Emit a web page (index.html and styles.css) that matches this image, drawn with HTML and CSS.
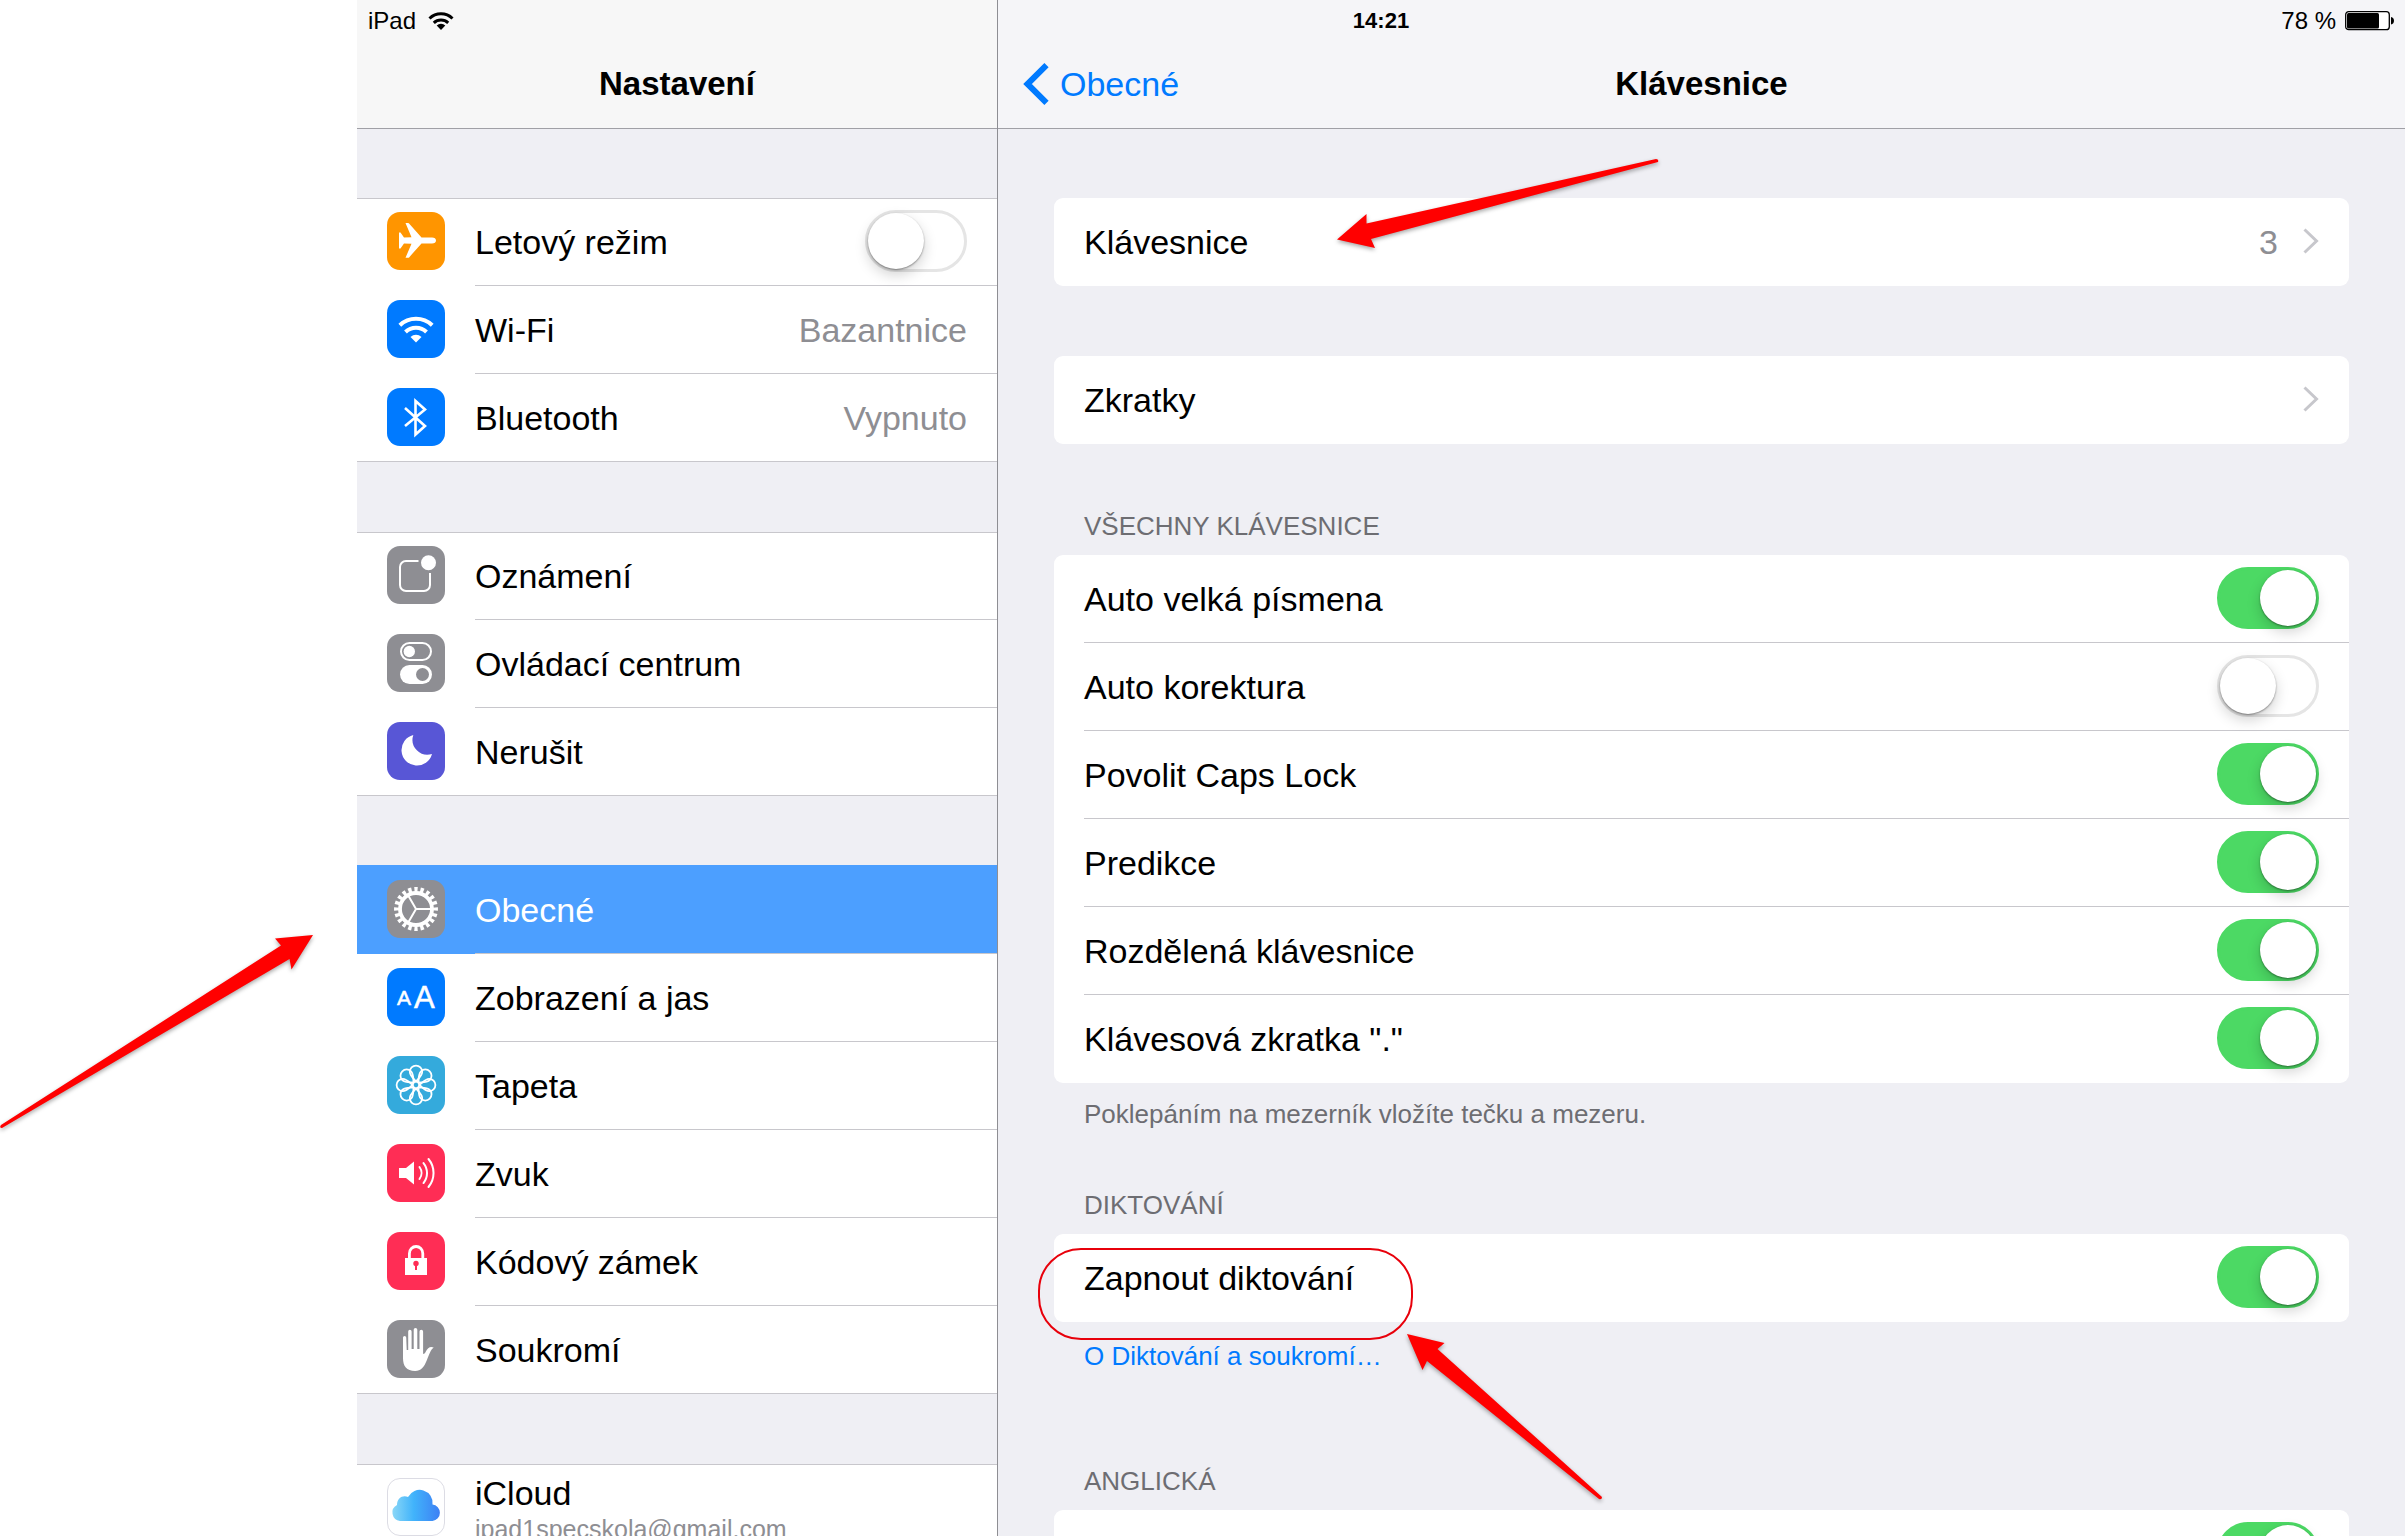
FILE: index.html
```html
<!DOCTYPE html>
<html lang="cs">
<head>
<meta charset="utf-8">
<meta name="viewport" content="width=device-width, initial-scale=1">
<title>Nastavení – Klávesnice</title>
<link rel="stylesheet" href="styles.css">
</head>
<body>
<div class="device">
  <div class="status">
    <span class="status-side">iPad
      <svg width="26" height="20" viewBox="0 0 26 20" aria-hidden="true"><g fill="none" stroke="#000" stroke-width="3"><path d="M1.500 7.500a16.500 16.500 0 0 1 23 0"/><path d="M5.800 11.800a10.500 10.500 0 0 1 14.400 0"/></g><path d="M13 19l-4.300-4.400a6 6 0 0 1 8.600 0z"/></svg>
    </span>
    <time class="status-time">14:21</time>
    <span class="status-side status-right">78 %
      <svg width="49" height="20" viewBox="0 0 49 20" aria-hidden="true"><rect x=".7" y=".7" width="43.600" height="18" rx="3" fill="#fff" stroke="#000" stroke-width="1.300"/><rect x="2" y="2" width="32" height="15.500" rx="1.500"/><path d="M46 6c4 .5 4 7 0 7.500z"/></svg>
    </span>
  </div>

  <aside class="sidebar">
    <header class="bar"><h1 class="title">Nastavení</h1></header>
    <nav class="scroll">
      <div class="group">
        <label class="row">
          <svg class="icon" viewBox="0 0 58 58" aria-hidden="true"><rect width="58" height="58" rx="13" fill="#ff9500"/><path fill="#fff" d="M49 28.500c0-2-1.500-3-4-3H34.500L22.500 12c-.5-.7-1-.9-2-.9h-2l6 14.200-7.500.3-3.500-5.100H12v16h1.500l3.500-5 7.500.3-6 14h2c1 0 1.500-.3 2-.9l12-13.400H45c2.500 0 4-1 4-3z"/></svg>
          <span class="cell"><span class="name">Letový režim</span><input class="switch" type="checkbox"></span>
        </label>
        <a class="row" href="#wifi">
          <svg class="icon" viewBox="0 0 58 58" aria-hidden="true"><rect width="58" height="58" rx="13" fill="#007aff"/><g fill="none" stroke="#fff" stroke-width="4"><path d="M12.800 25.300a23.500 23.500 0 0 1 32.400 0"/><path d="M18.500 32a15 15 0 0 1 21 0"/></g><path fill="#fff" d="M29 42.500l-5.500-5.600a8 8 0 0 1 11 0z"/></svg>
          <span class="cell"><span class="name">Wi-Fi</span><span class="value">Bazantnice</span></span>
        </a>
        <a class="row" href="#bluetooth">
          <svg class="icon" viewBox="0 0 58 58" aria-hidden="true"><rect width="58" height="58" rx="13" fill="#007aff"/><path fill="none" stroke="#fff" stroke-width="2.600" d="M18 20l20 18-9.500 8.500V13L38 21.500 18 38"/></svg>
          <span class="cell"><span class="name">Bluetooth</span><span class="value">Vypnuto</span></span>
        </a>
      </div>

      <div class="group">
        <a class="row" href="#oznameni">
          <svg class="icon" viewBox="0 0 58 58" aria-hidden="true"><rect width="58" height="58" rx="13" fill="#8e8e93"/><path fill="none" stroke="#fff" stroke-width="2" d="M31.500 15H19a6 6 0 0 0-6 6v18a6 6 0 0 0 6 6h18a6 6 0 0 0 6-6V27"/><circle cx="41.500" cy="16.700" r="7.500" fill="#fff"/></svg>
          <span class="cell"><span class="name">Oznámení</span></span>
        </a>
        <a class="row" href="#ovladaci-centrum">
          <svg class="icon" viewBox="0 0 58 58" aria-hidden="true"><rect width="58" height="58" rx="13" fill="#8e8e93"/><rect x="14" y="9" width="30" height="17" rx="8.500" fill="none" stroke="#fff" stroke-width="2"/><circle cx="22.300" cy="17.500" r="5.700" fill="#fff"/><rect x="13" y="31" width="32" height="19" rx="9.500" fill="#fff"/><circle cx="35.500" cy="40.500" r="6.500" fill="#8e8e93"/></svg>
          <span class="cell"><span class="name">Ovládací centrum</span></span>
        </a>
        <a class="row" href="#nerusit">
          <svg class="icon" viewBox="0 0 58 58" aria-hidden="true"><rect width="58" height="58" rx="13" fill="#5856d6"/><path fill="#fff" d="M26.300 13A15.500 15.500 0 1 0 45 32 15 15 0 0 1 26.300 13z"/></svg>
          <span class="cell"><span class="name">Nerušit</span></span>
        </a>
      </div>

      <div class="group">
        <a class="row row-selected" href="#obecne" aria-current="page">
          <svg class="icon" viewBox="0 0 58 58" aria-hidden="true"><rect width="58" height="58" rx="13" fill="#8e8e93"/><g fill="none" stroke="#fff"><circle cx="29" cy="29" r="16" stroke-width="3.800"/><circle cx="29" cy="29" r="19.200" stroke-width="5.500" pathLength="100" stroke-dasharray="2.700 2.300" stroke-dashoffset="1.350"/><path stroke-width="2" d="M29 29h15M29 29l-7.500-13M29 29l-7.500 13"/></g></svg>
          <span class="cell"><span class="name">Obecné</span></span>
        </a>
        <a class="row" href="#zobrazeni">
          <svg class="icon" viewBox="0 0 58 58" aria-hidden="true"><rect width="58" height="58" rx="13" fill="#007aff"/><g class="glyphs" fill="#fff" stroke="#fff" stroke-width=".5"><text x="10" y="37" font-size="21">A</text><text x="27" y="40" font-size="31">A</text></g></svg>
          <span class="cell"><span class="name">Zobrazení a jas</span></span>
        </a>
        <a class="row" href="#tapeta">
          <svg class="icon" viewBox="0 0 58 58" aria-hidden="true"><rect width="58" height="58" rx="13" fill="#34aadc"/><g fill="none" stroke="#fff" stroke-width="1.800"><circle cx="29" cy="29" r="3.300"/><path id="petal" d="M29 25.500C26 22 22.800 19.500 22.800 15.800a6.200 6.200 0 0 1 12.400 0C35.200 19.500 32 22 29 25.500z"/><use href="#petal" transform="rotate(45 29 29)"/><use href="#petal" transform="rotate(90 29 29)"/><use href="#petal" transform="rotate(135 29 29)"/><use href="#petal" transform="rotate(180 29 29)"/><use href="#petal" transform="rotate(225 29 29)"/><use href="#petal" transform="rotate(270 29 29)"/><use href="#petal" transform="rotate(315 29 29)"/></g></svg>
          <span class="cell"><span class="name">Tapeta</span></span>
        </a>
        <a class="row" href="#zvuk">
          <svg class="icon" viewBox="0 0 58 58" aria-hidden="true"><rect width="58" height="58" rx="13" fill="#ff2d55"/><path fill="#fff" d="M12 24h7l8-6.500v23L19 34h-7z"/><g fill="none" stroke="#fff" stroke-width="2" stroke-linecap="round"><path d="M32.500 23a10 10 0 0 1 0 12"/><path d="M36.500 19a16 16 0 0 1 0 20"/><path d="M41.500 15a22 22 0 0 1 0 28"/></g></svg>
          <span class="cell"><span class="name">Zvuk</span></span>
        </a>
        <a class="row" href="#kodovy-zamek">
          <svg class="icon" viewBox="0 0 58 58" aria-hidden="true"><rect width="58" height="58" rx="13" fill="#ff2d55"/><rect x="18" y="26" width="22" height="17" fill="#fff"/><path fill="none" stroke="#fff" stroke-width="2.800" d="M22.400 27v-5.500a6.700 7 0 0 1 13.400 0V27"/><circle cx="29" cy="31.500" r="2.700" fill="#ff2d55"/><path fill="#ff2d55" d="M28 32h2v6h-2z"/></svg>
          <span class="cell"><span class="name">Kódový zámek</span></span>
        </a>
        <a class="row" href="#soukromi">
          <svg class="icon" viewBox="0 0 58 58" aria-hidden="true"><rect width="58" height="58" rx="13" fill="#8e8e93"/><path fill="#fff" d="M16 17.500a1.600 1.600 0 0 1 3.200 0L19.700 30h1.500V11.500a1.700 1.700 0 0 1 3.400 0V29h2.100V9.800a1.800 1.800 0 0 1 3.600 0V29h2.200V11.500a1.800 1.800 0 0 1 3.600 0V34c1 0 2-.8 2.600-2.200 2-4.300 4.800-5.800 8-4.300-3 2-4.700 7.500-7 13-2.500 6.500-6 10.500-11.500 10.500C19.500 51 16 46 16 38z"/></svg>
          <span class="cell"><span class="name">Soukromí</span></span>
        </a>
      </div>

      <div class="group">
        <a class="row" href="#icloud">
          <svg class="icon" viewBox="0 0 58 58" aria-hidden="true"><defs><linearGradient id="cloud" x1="0" x2="1"><stop offset="0" stop-color="#8ad7f7"/><stop offset=".45" stop-color="#41b3fb"/><stop offset="1" stop-color="#3d80f4"/></linearGradient></defs><rect x=".5" y=".5" width="57" height="57" rx="12.500" fill="#fff" stroke="#dcdce4"/><path fill="url(#cloud)" d="M13 43a8.500 8.500 0 0 1-3-16C10 20 16 16.500 21 19A13 13 0 0 1 45.500 26.500 8.300 8.300 0 0 1 45.500 43z"/></svg>
          <span class="cell"><span class="name name-stack">iCloud<small class="detail">ipad1specskola@gmail.com</small></span></span>
        </a>
      </div>
    </nav>
  </aside>

  <main class="main">
    <header class="bar bar-main">
      <a class="back" href="#obecne"><svg width="26" height="42" viewBox="0 0 26 42" aria-hidden="true"><path fill="none" stroke="#007aff" stroke-width="6" d="M23.500 2.200L4.500 21l19 18.800"/></svg>Obecné</a>
      <h2 class="title">Klávesnice</h2>
    </header>
    <div class="scroll">
      <section class="card">
        <a class="row" href="#klavesnice"><span class="cell"><span class="name">Klávesnice</span><span class="value">3</span><svg class="chevron" viewBox="0 0 16 26" aria-hidden="true"><path d="M1.500 1.500L13.500 13l-12 11.500"/></svg></span></a>
      </section>
      <section class="card">
        <a class="row" href="#zkratky"><span class="cell"><span class="name">Zkratky</span><svg class="chevron" viewBox="0 0 16 26" aria-hidden="true"><path d="M1.500 1.500L13.500 13l-12 11.500"/></svg></span></a>
      </section>

      <h3 class="heading">VŠECHNY KLÁVESNICE</h3>
      <section class="card">
        <label class="row"><span class="cell"><span class="name">Auto velká písmena</span><input class="switch" type="checkbox" checked></span></label>
        <label class="row"><span class="cell"><span class="name">Auto korektura</span><input class="switch" type="checkbox"></span></label>
        <label class="row"><span class="cell"><span class="name">Povolit Caps Lock</span><input class="switch" type="checkbox" checked></span></label>
        <label class="row"><span class="cell"><span class="name">Predikce</span><input class="switch" type="checkbox" checked></span></label>
        <label class="row"><span class="cell"><span class="name">Rozdělená klávesnice</span><input class="switch" type="checkbox" checked></span></label>
        <label class="row"><span class="cell"><span class="name">Klávesová zkratka "."</span><input class="switch" type="checkbox" checked></span></label>
      </section>
      <p class="note">Poklepáním na mezerník vložíte tečku a mezeru.</p>

      <h3 class="heading heading-after-note">DIKTOVÁNÍ</h3>
      <section class="card">
        <label class="row"><span class="cell"><span class="name">Zapnout diktování</span><input class="switch" type="checkbox" checked></span></label>
      </section>
      <p class="note note-link"><a class="link" href="#o-diktovani">O Diktování a soukromí…</a></p>

      <h3 class="heading heading-after-link">ANGLICKÁ</h3>
      <section class="card">
        <label class="row"><span class="cell"><span class="name"></span><input class="switch" type="checkbox" checked aria-label="Anglická"></span></label>
      </section>
    </div>
  </main>
</div>

<svg class="marks" width="1680" height="1536" viewBox="0 0 1680 1536" aria-hidden="true">
  <g class="arrows" fill="#f00">
    <path d="M1337 239.500L1366.500 214V223.500L1656 159q3 0 2 3L1371 239l4 9z"/>
    <path d="M313 935L291.500 969.500 289.500 959 2 1128q-3 0-1-3L281 945.500l-6-7z"/>
    <path d="M1407 1334L1444.500 1343 1437.500 1349 1602 1497q0 3-3 2L1427 1361 1422.500 1370z"/>
  </g>
  <rect x="1039" y="1249" width="373" height="90" rx="42" fill="none" stroke="#e8000b" stroke-width="2"/>
</svg>
</body>
</html>
```

FILE: styles.css
```css
* {
  box-sizing: border-box;
}

body {
  margin: 0;
  background: #fff;
  color: #000;
  font-family: "Liberation Sans", Arial, Helvetica, sans-serif;
  font-size: 34px;
  overflow: hidden;
}

h1,
h2,
h3,
p {
  margin: 0;
  font-weight: 400;
}

a {
  color: inherit;
  text-decoration: none;
}

svg {
  display: block;
  flex: none;
}

.device {
  display: grid;
  grid-template-columns: 641px 1fr;
  grid-template-rows: 40px 1fr;
  height: 100vh;
  margin-left: 357px;
}

/* Status bar, laid over the tops of both panes */
.status {
  grid-area: 1 / 1 / 2 / 3;
  z-index: 1;
  display: grid;
  grid-template-columns: 1fr auto 1fr;
  align-items: center;
  padding: 2px 11px 0;
  font-size: 24px;
}

.status-side {
  display: flex;
  align-items: center;
  gap: 12px;
}

.status-right {
  justify-content: flex-end;
  gap: 9px;
}

.status-time {
  font-size: 22px;
  font-weight: 700;
}

.sidebar,
.main {
  display: flex;
  flex-direction: column;
  min-width: 0;
  min-height: 0;
  overflow: hidden;
  background: #efeff4;
}

.sidebar {
  grid-area: 1 / 1 / 3 / 2;
  border-right: 1px solid #8e8e93;
}

.main {
  grid-area: 1 / 2 / 3 / 3;
}

.bar {
  display: grid;
  flex: none;
  align-items: center;
  height: 129px;
  padding-top: 40px;
  border-bottom: 1px solid #a0a0a6;
  background: #f7f7f7;
}

.bar-main {
  grid-template-columns: 1fr auto 1fr;
  padding-left: 25px;
  padding-right: 25px;
  background: #f5f5f8;
}

.title {
  font-size: 33px;
  font-weight: 700;
  text-align: center;
}

.back {
  display: flex;
  align-items: center;
  gap: 11px;
  color: #007aff;
}

.scroll {
  flex: 1;
  min-height: 0;
  padding-top: 69px;
  overflow: hidden;
}

.group,
.card {
  background: #fff;
}

.group {
  box-shadow: inset 0 1px #c8c7cc, inset 0 -1px #c8c7cc;
}

.group + .group,
.card + .card {
  margin-top: 70px;
}

.row {
  display: flex;
  align-items: center;
  height: 88px;
  padding-left: 30px;
}

.icon {
  width: 58px;
  height: 58px;
  margin-bottom: 2px;
  margin-right: 30px;
}

.glyphs {
  font-family: "Liberation Sans", Arial, sans-serif;
}

.cell {
  display: flex;
  flex: 1;
  align-items: center;
  height: 88px;
  padding: 0 30px 1px 0;
  border-bottom: 1px solid #c8c7cc;
}

.row:last-child .cell {
  border-bottom-color: transparent;
}

.name {
  flex: 1;
  padding-top: 2px;
}

.name-stack {
  padding-top: 4px;
  line-height: 40px;
}

.value {
  padding-top: 2px;
  color: #8e8e93;
}

.detail {
  display: block;
  font-size: 25px;
  line-height: 32px;
  color: #8e8e93;
}

.row-selected {
  background: #4c9fff;
  box-shadow: 0 -1px #4c9fff;
  color: #fff;
}

.chevron {
  width: 16px;
  height: 26px;
  margin-left: 25px;
  fill: none;
  stroke: #c7c7cc;
  stroke-width: 3;
}

.switch {
  appearance: none;
  display: flex;
  width: 102px;
  height: 62px;
  margin: 0;
  border: 3px solid #e5e5e5;
  border-radius: 31px;
  background: #fff;
}

.switch::before {
  content: "";
  width: 56px;
  height: 56px;
  border-radius: 50%;
  background: #fff;
  box-shadow: 0 1px 2px rgba(0, 0, 0, .4), 0 6px 14px rgba(0, 0, 0, .18);
}

.switch:checked {
  justify-content: flex-end;
  border-color: #4cd964;
  background: #4cd964;
}

.main .scroll {
  padding-left: 56px;
  padding-right: 56px;
}

.card {
  border-radius: 9px;
}

.heading,
.note {
  padding: 0 30px;
  font-size: 26px;
  line-height: 32px;
  color: #6d6d72;
}

.heading {
  margin: 66px 0 13px;
}

.heading-after-note {
  margin-top: 59px;
}

.heading-after-link {
  margin-top: 93px;
}

.note {
  margin-top: 15px;
}

.note-link {
  margin-top: 18px;
}

.link {
  color: #007aff;
}

/* Tutorial arrows and outline drawn over the screen */
.marks {
  position: absolute;
  top: 0;
  left: 0;
  pointer-events: none;
}

.arrows {
  filter: drop-shadow(0 2px 2px rgba(0, 0, 0, .35));
}
```
